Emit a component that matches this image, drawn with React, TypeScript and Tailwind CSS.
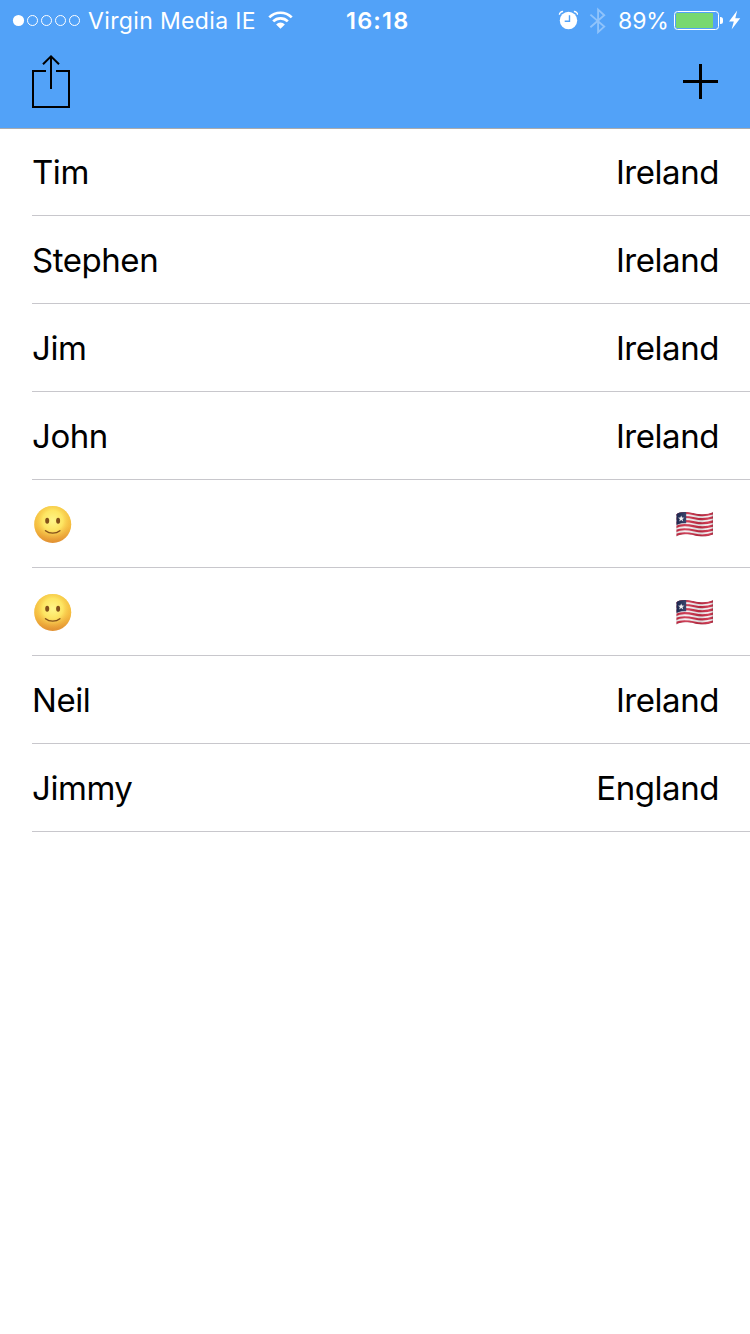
import React from "react";

type Kind = "text" | "emoji";
const rows: { name: string; country: string; kind: Kind }[] = [
  { name: "Tim", country: "Ireland", kind: "text" },
  { name: "Stephen", country: "Ireland", kind: "text" },
  { name: "Jim", country: "Ireland", kind: "text" },
  { name: "John", country: "Ireland", kind: "text" },
  { name: "Slightly smiling face", country: "Liberia", kind: "emoji" },
  { name: "Slightly smiling face", country: "Liberia", kind: "emoji" },
  { name: "Neil", country: "Ireland", kind: "text" },
  { name: "Jimmy", country: "England", kind: "text" },
];

function SignalDots() {
  return (
    <svg className="ml-3 h-[13px] w-[69px] shrink-0" viewBox="0 0 69 13">
      <circle cx="6.5" cy="6.5" r="5.6" fill="#fff" />
      {[20.5, 34.5, 48.5, 62.5].map((cx) => (
        <circle key={cx} cx={cx} cy="6.5" r="5" fill="none" stroke="#fff" strokeWidth="1" />
      ))}
    </svg>
  );
}

function Wifi() {
  return (
    <svg className="mb-px h-[18px] w-[25px] shrink-0" viewBox="0 0 25 18">
      <g fill="none" stroke="#fff" strokeWidth="2.7">
        <path d="M1.3 6.4A15.8 15.8 0 0 1 23.7 6.4" />
        <path d="M5.2 10.4A10.3 10.3 0 0 1 19.8 10.4" />
      </g>
      <path d="M8.1 13.4A6.3 6.3 0 0 1 16.9 13.4L12.5 17.8Z" fill="#fff" />
    </svg>
  );
}

function Alarm() {
  return (
    <svg className="mb-px h-[20px] w-[20px] shrink-0" viewBox="-.9 0 20 20">
      <circle cx="9.6" cy="10.5" r="8.7" fill="#fff" />
      <path d="M10.6 5.3V11.3H5.8" fill="none" stroke="#52a2f8" strokeWidth="1.4" />
      <path d="M.5 4.8C.5 3 2.1 1.3 4.2 1.5M18.7 4.8C18.7 3 17.1 1.3 15 1.5" fill="none" stroke="#fff" strokeWidth="1.4" />
    </svg>
  );
}

function Bluetooth() {
  return (
    <svg className="h-[28px] w-[17px] shrink-0" viewBox="0 0 17 28">
      <path d="M1.4 7.6L15.2 19.6L9.1 25.2V2.6L15.2 8.2L1.4 20.2" fill="none" stroke="#8fc3fb" strokeWidth="1.9" />
    </svg>
  );
}

function Battery() {
  return (
    <svg className="h-[20px] w-[50px] shrink-0" viewBox="0 0 50 20">
      <rect x=".5" y=".5" width="44" height="18" rx="3" fill="none" stroke="#fff" />
      <rect x="2" y="2" width="37" height="15" rx="1" fill="#78d870" />
      <path d="M46 6h.5a2.5 2.5 0 0 1 2.5 2.5v2a2.5 2.5 0 0 1-2.5 2.5h-.5z" fill="#fff" />
    </svg>
  );
}

function Bolt() {
  return (
    <svg className="mb-px h-[20px] w-[12px] shrink-0" viewBox="0 0 12 20">
      <path d="M8.2.6L0 11.4H4.8L2.6 19.6L11.2 8.3H6.3Z" fill="#fff" />
    </svg>
  );
}

function ShareIcon() {
  return (
    <svg className="h-[54px] w-[40px]" viewBox="0 0 40 54" fill="none" stroke="#000" strokeWidth="2">
      <path d="M15 16H2V52H38V16H25M20 34V1.5" />
      <path d="M12 9.3L20 1.4L28 9.3" />
    </svg>
  );
}

function PlusIcon() {
  return (
    <svg className="h-[35px] w-[35px]" viewBox="0 0 35 35" fill="#000">
      <rect x="16" width="3" height="35" />
      <rect y="16" width="35" height="3" />
    </svg>
  );
}

function Smile() {
  return (
    <svg className="ml-[2px] h-[38px] w-[38px]" viewBox="0 0 38 38" role="img" aria-label="Slightly smiling face">
      <defs>
        <linearGradient id="face" x1="0" y1="0" x2="0" y2="1">
          <stop offset="0" stopColor="#f6cf45" />
          <stop offset=".55" stopColor="#f5bd3e" />
          <stop offset="1" stopColor="#df8d32" />
        </linearGradient>
        <radialGradient id="glow" cx=".5" cy=".4" r=".55">
          <stop offset="0" stopColor="#fff68a" />
          <stop offset=".5" stopColor="#ffeb68" stopOpacity=".85" />
          <stop offset="1" stopColor="#f2ad3a" stopOpacity=".15" />
        </radialGradient>
      </defs>
      <circle cx="18.7" cy="19.4" r="18.5" fill="url(#face)" />
      <circle cx="18.7" cy="19.4" r="18.5" fill="url(#glow)" />
      <ellipse cx="13.2" cy="15.7" rx="2" ry="3" fill="#83501a" />
      <ellipse cx="24.1" cy="15.7" rx="2" ry="3" fill="#83501a" />
      <path d="M11.5 25.7C15.5 28.9 21.9 28.9 25.9 25.7" fill="none" stroke="#83501a" strokeWidth="1.4" strokeLinecap="round" />
    </svg>
  );
}

const wave = "M.5 3.2C3 .6 10 .3 18.5 2.2S32 3.2 37 1V23.4C32 25.5 27 26.4 18.5 24.4S3 23.3 .5 25.8Z";

function Flag() {
  return (
    <svg className="mt-[2px] mr-[5px] h-[27px] w-[38px]" viewBox="0 0 38 27" role="img" aria-label="Flag of Liberia">
      <defs>
        <clipPath id="cloth">
          <path d={wave} />
        </clipPath>
        <linearGradient id="shade">
          <stop offset="0" stopColor="#000" stopOpacity=".08" />
          <stop offset=".25" stopColor="#fff" stopOpacity=".12" />
          <stop offset=".65" stopColor="#000" stopOpacity=".12" />
          <stop offset=".88" stopColor="#fff" stopOpacity=".1" />
          <stop offset="1" stopColor="#000" stopOpacity=".15" />
        </linearGradient>
      </defs>
      <g clipPath="url(#cloth)">
        <path d={wave} fill="#f5f1f3" />
        {[0, 1, 2, 3, 4, 5].map((i) => (
          <path
            key={i}
            d="M-1 4.3C3 1.6 10 1.3 18.5 3.2S32 4.2 38 2"
            transform={`translate(0 ${i * 4.08})`}
            fill="none"
            stroke="#cc2b45"
            strokeWidth="2.2"
          />
        ))}
        <path d="M0 0H10.2V12.3C6 12 3 12.5 0 14.3Z" fill="#202b57" />
        <path d="M5.2 4.4L6 6.6L8.4 6.7L6.5 8.1L7.2 10.4L5.2 9.1L3.2 10.4L3.9 8.1L2 6.7L4.4 6.6Z" fill="#fff" />
        <path d={wave} fill="url(#shade)" stroke="#6c4050" strokeOpacity=".35" strokeWidth=".8" />
      </g>
    </svg>
  );
}

export default function App() {
  return (
    <div className="flex h-[1334px] w-[750px] flex-col overflow-hidden bg-white font-['Inter',sans-serif] text-black">
      <header className="flex h-[129px] shrink-0 flex-col border-b border-[#a9abae] bg-[#52a2f8]">
        <div className="flex h-[41px] shrink-0 items-center text-2xl leading-[41px] text-white">
          <SignalDots />
          <span className="ml-[7px] w-[180px] shrink-0 pt-[2px] text-[23px] whitespace-nowrap font-normal tracking-[0.35px]">Virgin Media IE</span>
          <Wifi />
          <span className="ml-[53px] w-[212px] shrink-0 text-[23.5px] whitespace-nowrap font-semibold tracking-[1.2px]">16:18</span>
          <Alarm />
          <span className="ml-[11px] flex"><Bluetooth /></span>
          <span className="ml-[12px] w-[56px] shrink-0 pt-[2px] text-[23px] whitespace-nowrap font-normal tracking-[-0.1px]">89%</span>
          <Battery />
          <span className="ml-[5px] flex"><Bolt /></span>
        </div>
        <div className="flex h-[81px] items-center justify-between pr-8 pl-[31px]">
          <button aria-label="Share"><ShareIcon /></button>
          <button aria-label="Add"><PlusIcon /></button>
        </div>
      </header>
      <ul className="-mt-px flex flex-col pl-8">
        {rows.map((row, i) => (
          <li key={i} className="flex h-[88px] items-center justify-between border-b border-[#c8c7cc] pr-[31px] text-[33px]">
            {row.kind === "emoji" ? (
              <>
                <Smile />
                <Flag />
              </>
            ) : (
              <>
                <span className="pt-[2px] tracking-[-0.45px]">{row.name}</span>
                <span className="pt-[2px] tracking-[-0.45px]">{row.country}</span>
              </>
            )}
          </li>
        ))}
      </ul>
    </div>
  );
}
